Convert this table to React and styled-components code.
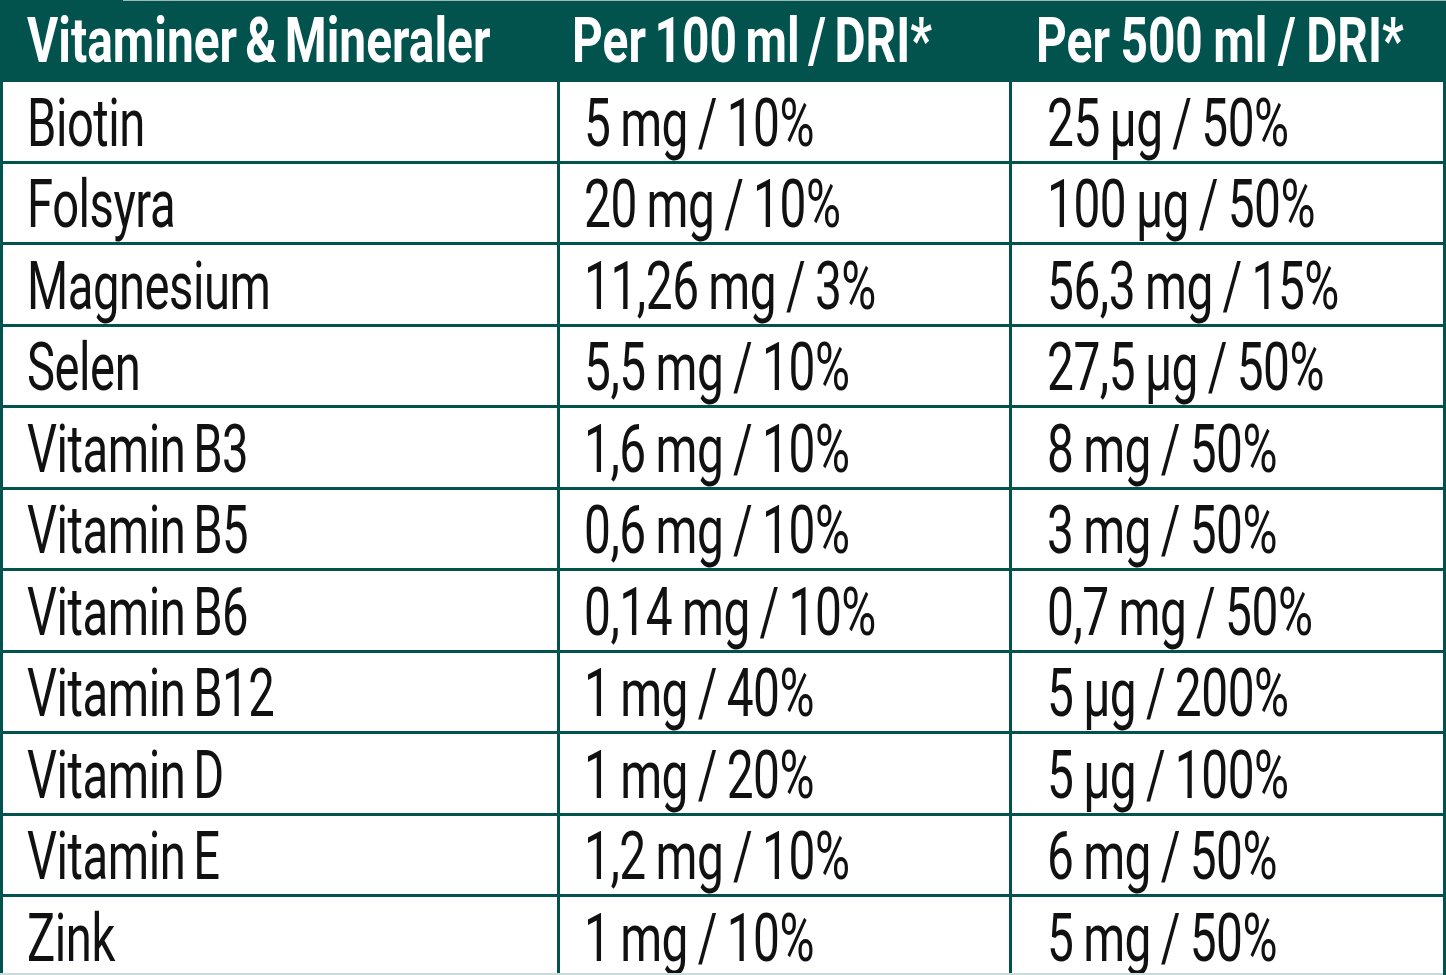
import React from "react";
import styled, { createGlobalStyle } from "styled-components";

const Global = createGlobalStyle`
  html, body { margin: 0; padding: 0; background: #ffffff; }
  body { font-family: Roboto, "Liberation Sans", sans-serif; overflow: hidden; }
`;

const GREEN = "#02524e";

const Table = styled.div`
  position: relative;
  width: 1446px;
  height: 975px;
  overflow: hidden;
  box-sizing: border-box;
  background: ${GREEN};
  padding: 0 3px;
  display: grid;
  grid-template-columns: 554px 449px 431px;
  grid-template-rows: 79px repeat(11, 78.5px);
  column-gap: 3px;
  row-gap: 3px;
  &::before {
    content: "";
    position: absolute;
    left: 123px;
    right: 0;
    top: 0;
    height: 1px;
    background: #9fb9b7;
  }
  &::after {
    content: "";
    position: absolute;
    left: 0;
    right: 3px;
    bottom: 0;
    height: 2px;
    background: #c9dada;
  }
`;

const HeadCell = styled.div`
  background: ${GREEN};
  display: flex;
  align-items: center;
  padding: 2px 0 0 ${(p) => p.$pad}px;
  overflow: visible;
  margin-left: ${(p) => (p.$first ? 0 : -3)}px;
`;

const Cell = styled.div`
  background: #ffffff;
  display: flex;
  align-items: center;
  padding: 5px 0 0 ${(p) => p.$pad}px;
  overflow: hidden;
`;

const HeadText = styled.span`
  display: inline-block;
  color: #ffffff;
  font-family: Roboto, "Liberation Sans", sans-serif;
  font-weight: 700;
  font-size: 63px;
  line-height: 1;
  white-space: nowrap;
  word-spacing: ${(p) => p.$ws}em;
  transform: scaleX(0.76);
  transform-origin: left center;
`;

const BodyText = styled.span`
  display: inline-block;
  color: #111111;
  font-family: Roboto, "Liberation Sans", sans-serif;
  font-weight: 400;
  font-size: 66px;
  line-height: 1;
  white-space: nowrap;
  word-spacing: ${(p) => (p.$tight ? -0.07 : -0.035)}em;
  letter-spacing: -0.01em;
  transform: scaleX(${(p) => (p.$tight ? 0.715 : 0.725)});
  transform-origin: left center;
`;

const headers = [
  { t: "Vitaminer & Mineraler", pad: 24, ws: -0.08 },
  { t: "Per 100 ml / DRI*", pad: 15, ws: -0.07 },
  { t: "Per 500 ml / DRI*", pad: 27, ws: -0.03 },
];

const rows = [
  ["Biotin", "5 mg / 10%", "25 µg / 50%"],
  ["Folsyra", "20 mg / 10%", "100 µg / 50%"],
  ["Magnesium", "11,26 mg / 3%", "56,3 mg / 15%"],
  ["Selen", "5,5 mg / 10%", "27,5 µg / 50%"],
  ["Vitamin B3", "1,6 mg / 10%", "8 mg / 50%"],
  ["Vitamin B5", "0,6 mg / 10%", "3 mg / 50%"],
  ["Vitamin B6", "0,14 mg / 10%", "0,7 mg / 50%"],
  ["Vitamin B12", "1 mg / 40%", "5 µg / 200%"],
  ["Vitamin D", "1 mg / 20%", "5 µg / 100%"],
  ["Vitamin E", "1,2 mg / 10%", "6 mg / 50%"],
  ["Zink", "1 mg / 10%", "5 mg / 50%"],
];

const bodyPads = [24, 24, 35];

export default function App() {
  return (
    <>
      <Global />
      <Table>
        {headers.map((h, i) => (
          <HeadCell key={h.t} $pad={h.pad} $first={i === 0}>
            <HeadText $ws={h.ws}>{h.t}</HeadText>
          </HeadCell>
        ))}
        {rows.map((r) =>
          r.map((c, j) => (
            <Cell key={r[0] + j} $pad={bodyPads[j]}>
              <BodyText $tight={j === 0}>{c}</BodyText>
            </Cell>
          ))
        )}
      </Table>
    </>
  );
}
